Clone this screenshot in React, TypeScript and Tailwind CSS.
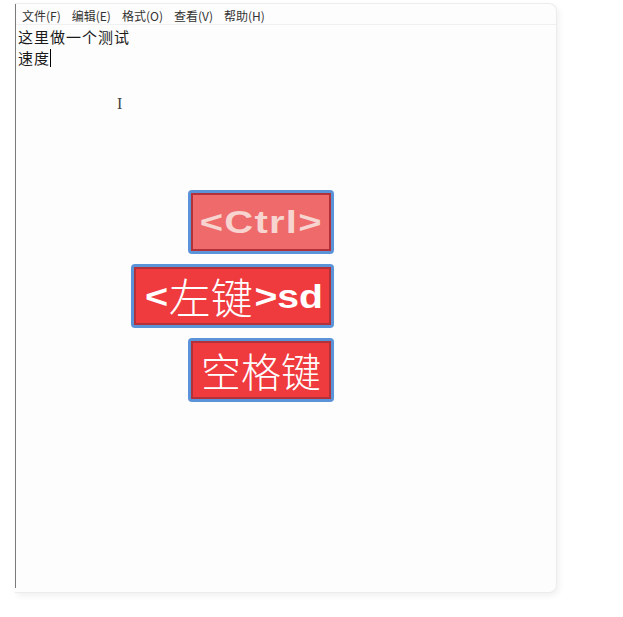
import React from 'react';

const menus = ['文件(F)', '编辑(E)', '格式(O)', '查看(V)', '帮助(H)'];

const Key: React.FC<{ children: React.ReactNode; width: string; pale?: boolean }> = ({ children, width, pale }) => (
  <div className={`${width} h-[64px] rounded-[4px] bg-[#5b93d9] p-[3px]`}>
    <div
      className={`flex h-full w-full items-center justify-center border-2 border-[#b3323a] ${
        pale ? 'bg-[#ee6a6b] text-[#f7d4cf]' : 'bg-[#ef3a3e] text-white'
      }`}
    >
      {children}
    </div>
  </div>
);

export default function App() {
  const cjk = { fontFamily: '"Noto Sans CJK SC", sans-serif' };
  const bold = { fontFamily: '"Liberation Sans", Arial, sans-serif' };

  return (
    <div className="h-[617px] w-[623px] bg-white pt-[3px] pl-[15px]">
      <div className="flex h-[590px] w-[542px] flex-col rounded-tr-[8px] rounded-br-[8px] border border-l-0 border-[#ececec] bg-[#fdfdfd] shadow-[2px_3px_6px_rgba(0,0,0,0.06)]">
        <div className="flex h-full border-l border-[#7b7b7b] mb-[4px]">
          <div className="flex w-full flex-col">
            <div
              className="flex h-[21px] items-center gap-[11px] border-b border-[#f0f0f0] pl-[6px] pt-[3px] text-[12px] text-[#333]"
              style={cjk}
            >
              {menus.map((m) => (
                <span key={m}>{m}</span>
              ))}
            </div>
            <div className="pl-[2px] pt-[1px] text-[15px] leading-[21px] tracking-[1px] text-[#1a1a1a]" style={cjk}>
              <div>这里做一个测试</div>
              <div className="flex items-center">
                速度<span className="inline-block h-[18px] w-px bg-black" />
              </div>
            </div>
            <div className="ml-[101px] mt-[28px] text-[16px] leading-none text-[#444]" style={{ fontFamily: '"Liberation Serif", serif' }}>
              I
            </div>
            <div className="ml-[115px] mt-[78px] flex w-[203px] flex-col items-end gap-[10px]">
              <Key width="w-[146px]" pale>
                <span className="inline-block scale-x-[1.25] text-[32px] font-bold tracking-[1px] leading-none" style={bold}>
                  &lt;Ctrl&gt;
                </span>
              </Key>
              <Key width="w-[203px]">
                <span className="flex items-center leading-none">
                  <span className="mr-[3px] inline-block scale-x-[1.2] text-[33px] font-bold" style={bold}>&lt;</span>
                  <span className="text-[42px] font-light" style={cjk}>左键</span>
                  <span className="ml-[6px] inline-block scale-x-[1.15] text-[34px] font-bold" style={bold}>&gt;sd</span>
                </span>
              </Key>
              <Key width="w-[146px]">
                <span className="text-[40px] font-light leading-none" style={cjk}>空格键</span>
              </Key>
            </div>
          </div>
        </div>
      </div>
    </div>
  );
}
